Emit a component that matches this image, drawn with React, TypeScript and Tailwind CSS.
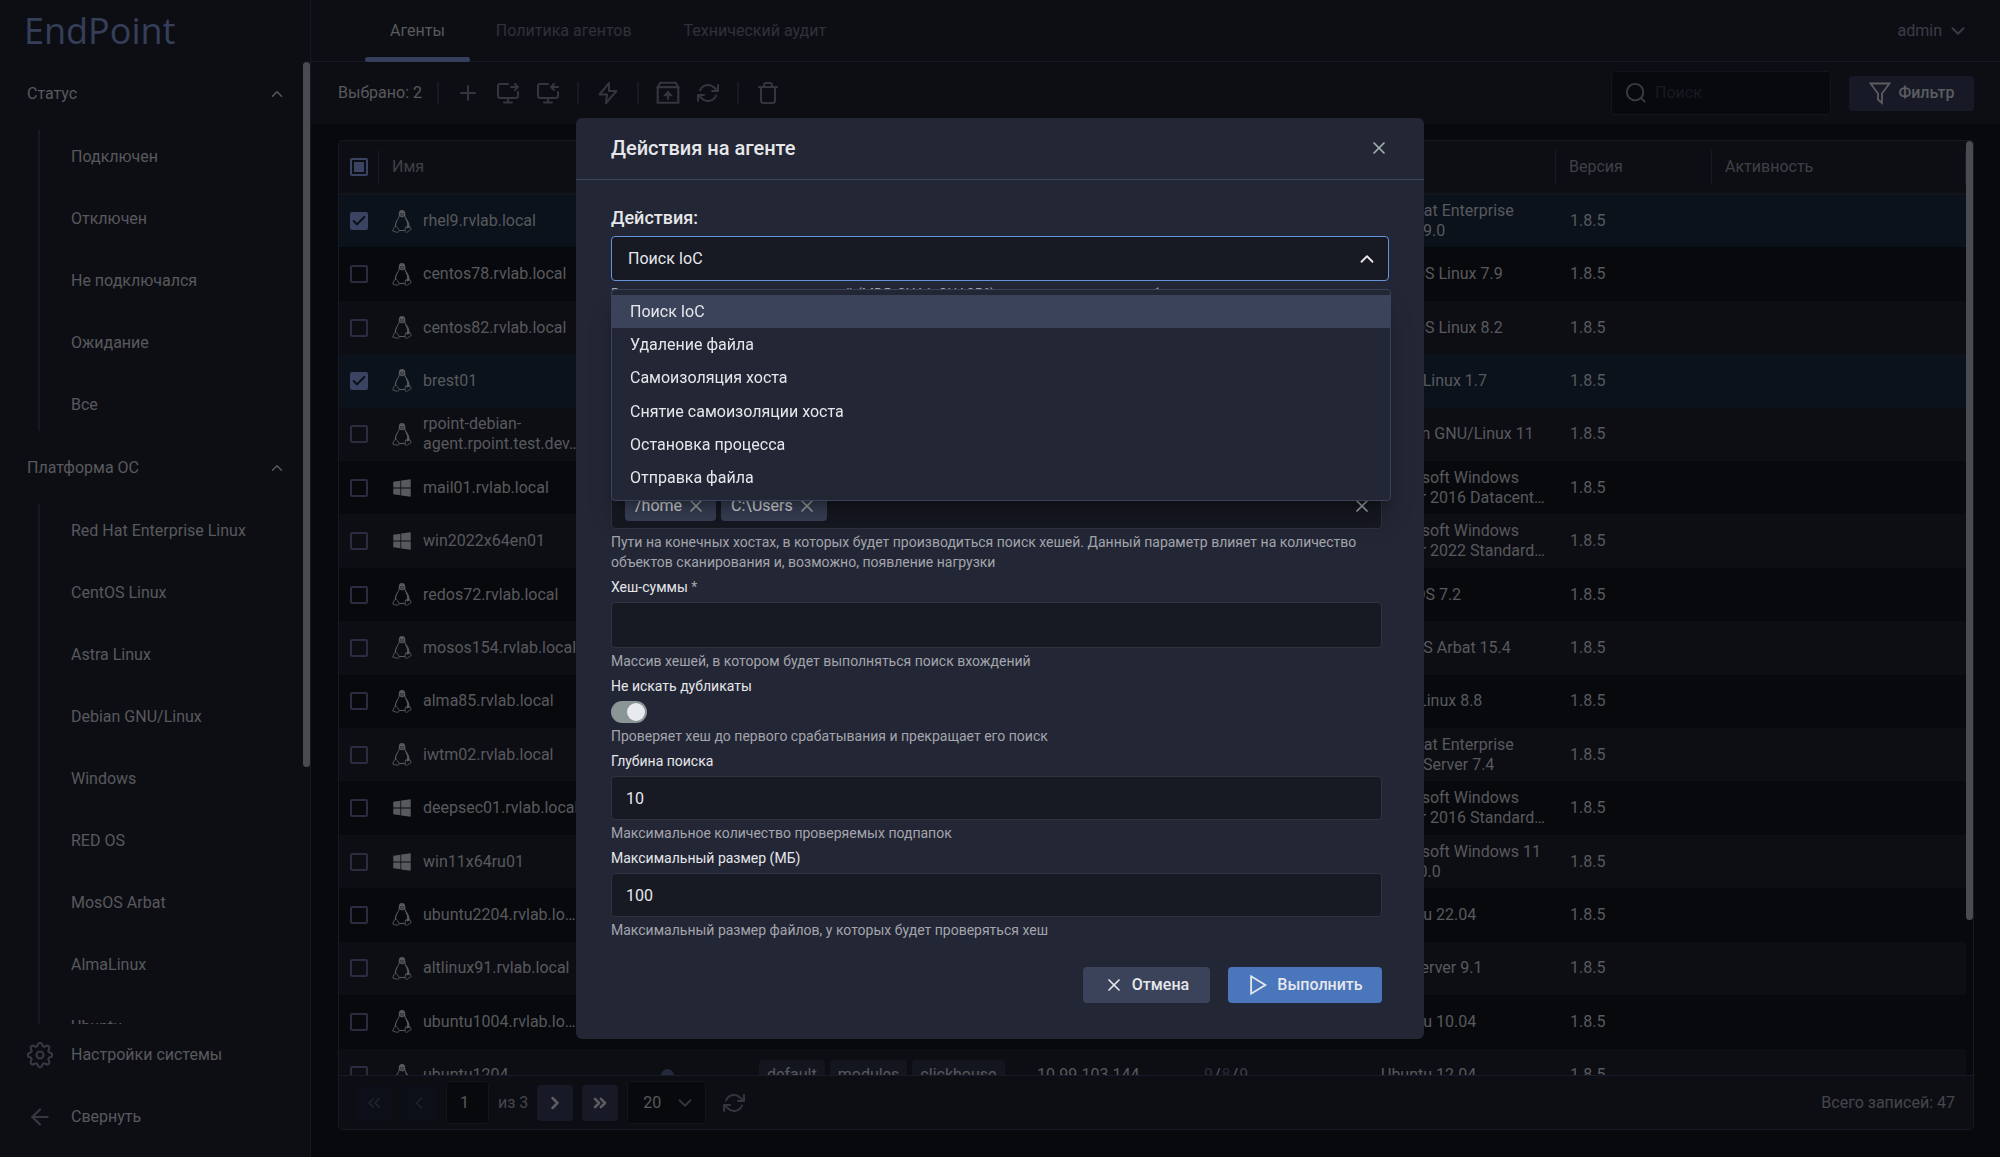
import { type FC, type ReactNode } from "react"
import clsx from "clsx"
import { FaWindows } from "react-icons/fa"
import {
  ArrowLeft,
  Check,
  ChevronDown,
  ChevronLeft,
  ChevronRight,
  ChevronsLeft,
  ChevronsRight,
  ChevronUp,
  Plus,
  X,
} from "lucide-react"

interface Agent {
  name: string
  os: string
  platform: "linux" | "windows"
  selected?: boolean
  tags?: string[]
  ip?: string
  counts?: number[]
}

// non-breaking spaces keep the server edition on one line so it gets the ellipsis
const agents: Agent[] = [
  { name: "rhel9.rvlab.local", os: "Red Hat Enterprise Linux 9.0", platform: "linux", selected: true },
  { name: "centos78.rvlab.local", os: "CentOS Linux 7.9", platform: "linux" },
  { name: "centos82.rvlab.local", os: "CentOS Linux 8.2", platform: "linux" },
  { name: "brest01", os: "Astra Linux 1.7", platform: "linux", selected: true },
  { name: "rpoint-debian-agent.rpoint.test.dev.local", os: "Debian GNU/Linux 11", platform: "linux" },
  { name: "mail01.rvlab.local", os: "Microsoft Windows Server\u00a02016\u00a0Datacenter", platform: "windows" },
  { name: "win2022x64en01", os: "Microsoft Windows Server\u00a02022\u00a0Standard\u00a021H2", platform: "windows" },
  { name: "redos72.rvlab.local", os: "RED OS 7.2", platform: "linux" },
  { name: "mosos154.rvlab.local", os: "MosOS Arbat 15.4", platform: "linux" },
  { name: "alma85.rvlab.local", os: "AlmaLinux 8.8", platform: "linux" },
  { name: "iwtm02.rvlab.local", os: "Red Hat Enterprise Linux Server 7.4", platform: "linux" },
  { name: "deepsec01.rvlab.local", os: "Microsoft Windows Server\u00a02016\u00a0Standard\u00a01607", platform: "windows" },
  { name: "win11x64ru01", os: "Microsoft Windows 11 Pro 10.0", platform: "windows" },
  { name: "ubuntu2204.rvlab.local", os: "Ubuntu 22.04", platform: "linux" },
  { name: "altlinux91.rvlab.local", os: "ALT Server 9.1", platform: "linux" },
  { name: "ubuntu1004.rvlab.local", os: "Ubuntu 10.04", platform: "linux" },
  {
    name: "ubuntu1204",
    os: "Ubuntu 12.04",
    platform: "linux",
    tags: ["default", "modules", "clickhouse"],
    ip: "10.99.103.144",
    counts: [9, 8, 9],
  },
]

const statuses = ["Подключен", "Отключен", "Не подключался", "Ожидание", "Все"]
const platforms = [
  "Red Hat Enterprise Linux",
  "CentOS Linux",
  "Astra Linux",
  "Debian GNU/Linux",
  "Windows",
  "RED OS",
  "MosOS Arbat",
  "AlmaLinux",
  "Ubuntu",
]

const actions = [
  "Поиск IoC",
  "Удаление файла",
  "Самоизоляция хоста",
  "Снятие самоизоляции хоста",
  "Остановка процесса",
  "Отправка файла",
]

interface IconProps {
  className?: string
  children?: ReactNode
}

const Icon: FC<IconProps> = ({ className, children }) => (
  <svg
    viewBox="0 0 24 24"
    className={clsx("shrink-0", className ?? "size-6")}
    fill="none"
    stroke="currentColor"
    strokeWidth="2"
    strokeLinecap="round"
    strokeLinejoin="round"
    aria-hidden="true"
  >
    {children}
  </svg>
)

const MonitorOut = () => (
  <Icon>
    <path d="M12 3H4a2 2 0 0 0-2 2v10a2 2 0 0 0 2 2h16a2 2 0 0 0 2-2v-4M12 17v4M8 21.5h8M15 6h7M19 3l3 3-3 3" />
  </Icon>
)

const MonitorIn = () => (
  <Icon>
    <path d="M12 3H4a2 2 0 0 0-2 2v10a2 2 0 0 0 2 2h16a2 2 0 0 0 2-2v-4M12 17v4M8 21.5h8M22 6h-7M18 3l-3 3 3 3" />
  </Icon>
)

const Bolt = () => (
  <Icon>
    <path d="M13 2 3.5 13.5H11L10 22l10.5-12H13z" />
  </Icon>
)

const Upload = () => (
  <Icon className="size-[26px]">
    <path
      d="M2.5 6.5V21h19V6.5M2.5 6.5 5 2.5h14l2.5 4zM12 17.500V13M9.500 14 12 11.200l2.500 2.800z"
      strokeLinejoin="miter"
    />
  </Icon>
)

const Refresh = () => (
  <Icon>
    <path d="M22 4v6h-6M2 20v-6h6M4 9.5a8.5 8.5 0 0 1 14-3L22 10M2 14l4 3.5a8.5 8.5 0 0 0 14-3" />
  </Icon>
)

const Trash = () => (
  <Icon>
    <path d="M3 6h18M5 6v13.5A2.5 2.5 0 0 0 7.5 22h9a2.5 2.5 0 0 0 2.5-2.5V6M8 5.5V4a2 2 0 0 1 2-2h4a2 2 0 0 1 2 2v1.5" />
  </Icon>
)

const Gear = () => (
  <Icon className="size-7">
    <circle cx="12" cy="12" r="3" strokeWidth="1.8" />
    <path
      strokeWidth="1.8"
      d="M10.3 2.6a1.9 1.9 0 0 1 3.4 0l.5 1.3a1.5 1.5 0 0 0 2 .8l1.2-.6a1.9 1.9 0 0 1 2.5 2.5l-.6 1.2a1.5 1.5 0 0 0 .8 2l1.3.5a1.9 1.9 0 0 1 0 3.4l-1.3.5a1.5 1.5 0 0 0-.8 2l.6 1.2a1.9 1.9 0 0 1-2.5 2.5l-1.2-.6a1.5 1.5 0 0 0-2 .8l-.5 1.3a1.9 1.9 0 0 1-3.4 0l-.5-1.3a1.5 1.5 0 0 0-2-.8l-1.2.6a1.9 1.9 0 0 1-2.5-2.5l.6-1.2a1.5 1.5 0 0 0-.8-2l-1.3-.5a1.9 1.9 0 0 1 0-3.4l1.3-.5a1.5 1.5 0 0 0 .8-2l-.6-1.2a1.9 1.9 0 0 1 2.5-2.5l1.2.6a1.5 1.5 0 0 0 2-.8z"
    />
  </Icon>
)

const Tux = () => (
  <svg viewBox="0 0 20 23" className="h-[23px] w-5 shrink-0" fill="none" stroke="currentColor" aria-hidden="true">
    <path
      fill="currentColor"
      stroke="none"
      d="M10 0C7.7 0 6.7 1.6 6.8 4.2c.1 2.3-.4 3.3-1.7 5.2C3.7 11.5 2.7 13.600 2.800 17l1.300-.2c-.1-2.600.4-4.400 1.500-6.400.9-1.600 1.600-2.600 1.900-4.100l2.600 1.100 2.300-1.200c.2 1.500.9 2.500 1.700 4.200.9 1.900 1.300 3.700.9 5.600l-.6 1 .7 1.600 2.300-.8c.6-3.100-.6-6.300-2.500-8.800-1.300-1.700-1.600-2.700-1.600-4.800C13.300 1.600 12.300 0 10 0z"
    />
    <path fill="#0b0c10" stroke="none" d="M8.3 3.3h1v1.300h-1zM10.600 3.300h1.100v1.300h-1.100zM8.500 5.300h3l-1.500.8z" />
    <path
      strokeWidth="0.9"
      strokeLinejoin="round"
      d="M3.3 16.3 1.9 17.8c-.2.9-.8 2.1-1.2 3.2 1.3.8 3.2.8 4.9 1.3 1-.1 1.8-.9 1.500-2-.8-1.500-1.800-3.500-3.800-4zM16.800 16.600c-1 .9-2.400.5-3 .2-.7 1.600-.9 3.200-.7 4.700.8 1.200 2 .9 2.900 0 1-.9 2.400-1.300 3.400-2.100-.7-.7-1-1.500-1.300-2.500z"
    />
    <path strokeWidth="1.1" d="M7.2 20.5h5.7" />
  </svg>
)

const ToolButton: FC<{ label: string; children: ReactNode }> = ({ label, children }) => (
  <button type="button" aria-label={label} className="flex size-10 items-center justify-center text-[#34353f]">
    {children}
  </button>
)

const Separator = () => <div className="mx-[9px] h-[22px] w-[2px] bg-[#171824]" />

interface SectionProps {
  title: string
  items: string[]
}

const SidebarSection: FC<SectionProps> = ({ title, items }) => (
  <section className="mb-[5px]">
    <button type="button" className="mb-[5px] flex h-[63px] w-full items-center justify-between pr-[17px] pl-[27px]">
      {title}
      <ChevronUp className="size-[18px]" />
    </button>
    <ul className="ml-[38px] flex flex-col gap-[9px] border-l-2 border-[#171824] pl-[31px]">
      {items.map((item) => (
        <li key={item}>
          <a href="#" className="flex h-[53px] items-center">
            {item}
          </a>
        </li>
      ))}
    </ul>
  </section>
)

const Sidebar = () => (
  <aside className="flex w-[311px] shrink-0 flex-col border-r border-[#171824] bg-[#0d0e14]">
    <div className="flex h-[62px] shrink-0 items-center pl-6 font-['Open_Sans',sans-serif] text-4xl text-[#363f5a]">
      EndPoint
    </div>
    <div className="flex min-h-0 flex-1">
      <div className="min-w-0 flex-1 overflow-hidden">
        <SidebarSection title="Статус" items={statuses} />
        <SidebarSection title="Платформа ОС" items={platforms} />
      </div>
      <div className="h-[705px] w-[7px] rounded-full bg-[#4a4b50]" />
    </div>
    <div className="shrink-0 pb-[9px]">
      <a href="#" className="flex h-[62px] items-center gap-[17px] pl-[26px]">
        <span className="flex w-7 justify-center text-[#363843]">
          <Gear />
        </span>
        Настройки системы
      </a>
      <button type="button" className="flex h-[62px] items-center gap-[17px] pl-[26px]">
        <span className="flex w-7 justify-center text-[#363843]">
          <ArrowLeft className="size-[26px]" />
        </span>
        Свернуть
      </button>
    </div>
  </aside>
)

const Topbar = () => (
  <header className="flex h-[62px] shrink-0 items-center justify-between border-b border-[#171921] bg-[#0d0e14] pr-[31px] pl-[54px]">
    <nav className="flex self-stretch text-[#30313b]">
      <a href="#" className="relative flex items-center px-[25px] text-[#58595d]">
        Агенты
        <span className="absolute inset-x-0 -bottom-px h-[5px] rounded-full bg-[#363f5c]" />
      </a>
      <a href="#" className="flex items-center px-[26px]">
        Политика агентов
      </a>
      <a href="#" className="flex items-center px-[26px]">
        Технический аудит
      </a>
    </nav>
    <button type="button" className="flex items-center gap-[5px] text-[#3c3d48]">
      admin
      <ChevronDown className="size-[22px]" />
    </button>
  </header>
)

const Toolbar = () => (
  <div className="flex h-[62px] shrink-0 items-center bg-[#0d0e14] pr-[26px] pl-[27px]">
    <span className="mr-1.5">Выбрано: 2</span>
    <Separator />
    <ToolButton label="Добавить">
      <Plus className="size-6" />
    </ToolButton>
    <ToolButton label="Отправить">
      <MonitorOut />
    </ToolButton>
    <ToolButton label="Получить">
      <MonitorIn />
    </ToolButton>
    <Separator />
    <ToolButton label="Действие">
      <Bolt />
    </ToolButton>
    <Separator />
    <ToolButton label="Обновить агент">
      <Upload />
    </ToolButton>
    <ToolButton label="Обновить">
      <Refresh />
    </ToolButton>
    <Separator />
    <ToolButton label="Удалить">
      <Trash />
    </ToolButton>
    <label className="ml-auto flex h-11 w-[220px] items-center gap-2 rounded border border-[#13141c] bg-[#08090d] pl-[13px]">
      <Icon className="size-[22px] text-[#3a3b46]">
        <circle cx="11" cy="11" r="9" />
        <path d="m18 18 3.5 3.5" />
      </Icon>
      <input
        type="text"
        aria-label="Поиск"
        placeholder="Поиск"
        className="w-full min-w-0 bg-transparent outline-none placeholder:text-[#191a24]"
      />
    </label>
    <button
      type="button"
      className="ml-[18px] flex h-[35px] w-[125px] items-center justify-center gap-1.5 rounded bg-[#171a26] font-medium text-[#5c5d61]"
    >
      <Icon className="size-6">
        <path d="M2.5 2.5h19L14 12.5V22l-4-3.5v-6z" strokeWidth="1.8" strokeLinejoin="miter" />
      </Icon>
      Фильтр
    </button>
  </div>
)

const Tick: FC<{ label: string; checked?: boolean }> = ({ label, checked }) => (
  <span className="grid size-[18px] place-items-center">
    <input
      type="checkbox"
      aria-label={label}
      defaultChecked={checked}
      className="col-start-1 row-start-1 size-[18px] appearance-none rounded-xs border-2 border-[#2a2d3f] checked:border-[#3a4362] checked:bg-[#3a4362]"
    />
    {checked && <Check className="pointer-events-none col-start-1 row-start-1 size-4 text-[#0b0f17]" strokeWidth={3} />}
  </span>
)

const AgentRow: FC<{ agent: Agent }> = ({ agent }) => (
  <tr className={clsx("h-[53px]", agent.selected ? "bg-[#0b121b]" : "odd:bg-[#0d0e13] even:bg-[#08090d]")}>
    <td className="pl-[11px]">
      <Tick label={agent.name} checked={agent.selected} />
    </td>
    <td className="pr-2 pl-[13px]">
      <div className="flex items-center gap-[11px]">
        {agent.platform === "linux" ? <Tux /> : <FaWindows className="size-5 shrink-0" />}
        <span className="line-clamp-2 min-w-0 text-ellipsis">{agent.name}</span>
      </div>
    </td>
    <td>{agent.tags && <span className="mx-auto block size-[13px] rounded-full bg-[#242a3e]" />}</td>
    <td className="pl-[14px]">
      <div className="flex gap-[5px]">
        {agent.tags?.map((tag) => (
          <span key={tag} className="flex h-[30px] items-center rounded bg-[#14161f] px-2">
            {tag}
          </span>
        ))}
      </div>
    </td>
    <td className="pl-[14px]">{agent.ip}</td>
    <td className="pl-[14px]">
      {agent.counts && (
        <span className="flex gap-px">
          <span className="text-[#2c2d38]">{agent.counts[0]}</span>/
          <span className="text-[#23263a]">{agent.counts[1]}</span>/
          <span className="text-[#3c3d48]">{agent.counts[2]}</span>
        </span>
      )}
    </td>
    <td className="pr-[10px] pl-[14px]">
      <span className="line-clamp-2 text-ellipsis">{agent.os}</span>
    </td>
    <td className="pl-[14px]">1.8.5</td>
    <td />
  </tr>
)

const HeadCell: FC<{ children?: ReactNode }> = ({ children }) => (
  <th className="p-0 text-left font-normal">
    <div className="flex h-[35px] items-center border-r border-[#171924] pl-[13px]">{children}</div>
  </th>
)

const PageButton: FC<{ label: string; disabled?: boolean; children: ReactNode }> = ({ label, disabled, children }) => (
  <button
    type="button"
    aria-label={label}
    disabled={disabled}
    className="flex size-9 items-center justify-center rounded bg-[#171a26] text-[#5c5d61] disabled:bg-[#0c0f17] disabled:text-[#202331]"
  >
    {children}
  </button>
)

const Pagination = () => (
  <footer className="flex h-[54px] shrink-0 items-center gap-[9px] border-t border-[#171a29] bg-[#0d0e13] pr-[18px] pl-[17px]">
    <PageButton label="Первая" disabled>
      <ChevronsLeft className="size-5" />
    </PageButton>
    <PageButton label="Назад" disabled>
      <ChevronLeft className="size-5" />
    </PageButton>
    <input
      type="text"
      aria-label="Страница"
      defaultValue="1"
      className="h-[43px] w-[43px] rounded border border-[#13141c] bg-[#08090d] pl-[13px] outline-none"
    />
    <span className="text-[#45464c]">из 3</span>
    <PageButton label="Вперёд">
      <ChevronRight className="size-5" strokeWidth={3} />
    </PageButton>
    <PageButton label="Последняя">
      <ChevronsRight className="size-5" strokeWidth={3} />
    </PageButton>
    <div className="grid h-[43px] w-[79px] items-center rounded border border-[#13141c] bg-[#08090d]">
      <select
        aria-label="Записей на странице"
        className="col-start-1 row-start-1 appearance-none bg-transparent pl-[15px] outline-none"
      >
        <option>20</option>
      </select>
      <ChevronDown className="pointer-events-none col-start-1 row-start-1 mr-[9px] size-[22px] justify-self-end text-[#34353f]" />
    </div>
    <button type="button" aria-label="Обновить" className="ml-[7px] text-[#34353f]">
      <Refresh />
    </button>
    <span className="ml-auto text-[#45464c]">Всего записей: 47</span>
  </footer>
)

const AgentTable = () => (
  <div className="mr-[26px] mb-[27px] ml-[27px] mt-4 flex min-h-0 flex-1 flex-col overflow-hidden rounded border border-[#171924]">
    <div className="flex min-h-0 flex-1 overflow-hidden">
      <div className="min-w-0 flex-1 overflow-hidden">
        <table className="h-[961px] w-full table-fixed border-collapse">
          <colgroup>
            <col className="w-[40px]" />
            <col className="w-[211px]" />
            <col className="w-[155px]" />
            <col className="w-[278px]" />
            <col className="w-[167px]" />
            <col className="w-[177px]" />
            <col className="w-[189px]" />
            <col className="w-[156px]" />
            <col />
          </colgroup>
          <thead className="bg-[#0d0e13] text-[#3f4047]">
            <tr className="h-[53px] border-b-2 border-[#12151c]">
              <th className="p-0">
                <div className="flex h-[35px] items-center border-r border-[#171924] pl-[11px]">
                  <span className="grid size-[18px] place-items-center">
                    <input
                      type="checkbox"
                      aria-label="Выбрать все"
                      className="col-start-1 row-start-1 size-[18px] appearance-none rounded-xs border-2 border-[#3a4362]"
                    />
                    <span className="pointer-events-none col-start-1 row-start-1 size-[10px] bg-[#3a4362]" />
                  </span>
                </div>
              </th>
              <HeadCell>Имя</HeadCell>
              <HeadCell />
              <HeadCell />
              <HeadCell />
              <HeadCell />
              <HeadCell />
              <HeadCell>Версия</HeadCell>
              <HeadCell>Активность</HeadCell>
            </tr>
          </thead>
          <tbody>
            {agents.map((agent) => (
              <AgentRow key={agent.name} agent={agent} />
            ))}
          </tbody>
        </table>
      </div>
      <div className="h-[779px] w-[7px] rounded-full bg-[#4a4b50]" />
    </div>
    <Pagination />
  </div>
)

interface FieldProps {
  id: string
  label: ReactNode
  help: string
  children: ReactNode
}

const Field: FC<FieldProps> = ({ id, label, help, children }) => (
  <div className="mb-[5px] flex flex-col text-sm leading-5">
    <label htmlFor={id} className="mb-[5px]">
      {label}
    </label>
    {children}
    <p className="mt-[3px] text-[#a3a5ad]">{help}</p>
  </div>
)

const inputClass = "w-full rounded border border-[#2f323f] bg-[#171923] px-[14px] text-base outline-none"

const PathTag: FC<{ path: string }> = ({ path }) => (
  <span className="flex h-[30px] items-center gap-1 rounded bg-[#3b435a] px-[10px] text-base">
    {path}
    <button type="button" aria-label={`Удалить ${path}`} className="text-[#a5b0b0]">
      <X className="size-5" />
    </button>
  </span>
)

const ActionSelect = () => (
  <div className="relative mt-1.5">
    <button
      id="action"
      type="button"
      aria-haspopup="listbox"
      aria-expanded="true"
      className="flex h-[45px] w-full items-center justify-between rounded border border-[#6493dc] bg-[#171923] pr-[10px] pl-4"
    >
      Поиск IoC
      <ChevronUp className="size-[22px]" />
    </button>
    <ul
      role="listbox"
      aria-label="Действия"
      className="absolute top-[53px] -right-0.5 left-0 flex h-[212px] flex-col rounded border border-[#3b435a] bg-[#232634] py-[5px] shadow-xl shadow-black/30"
    >
      {actions.map((action, idx) => (
        <li
          key={action}
          role="option"
          aria-selected={idx === 0}
          className="flex flex-1 items-center px-[18px] aria-selected:bg-[#3b435a]"
        >
          {action}
        </li>
      ))}
    </ul>
  </div>
)

const ActionDialog = () => (
  <div role="dialog" aria-labelledby="dialog-title" className="w-[848px] rounded-md bg-[#232634] text-[#e6e7eb]">
    <div className="flex h-[62px] items-center justify-between border-b border-[#3b435a] px-[35px] pb-0.5">
      <h2 id="dialog-title" className="text-xl font-medium">
        Действия на агенте
      </h2>
      <button type="button" aria-label="Закрыть" className="text-[#a5b0b0]">
        <X className="size-5" />
      </button>
    </div>
    <div className="px-[35px] pt-[26px] pb-9">
      <label htmlFor="action" className="block text-lg leading-6 font-medium">
        Действия:
      </label>
      <ActionSelect />
      <div className="pt-[3px] pr-[7px]">
        <p className="mb-[154px] text-sm leading-5 text-[#a3a5ad]">
          Выполняет поиск списка вхождений (MD5, SHA1, SHA256) на конечных хостах и объектах
        </p>
        <Field
          id="paths"
          label="Пути"
          help="Пути на конечных хостах, в которых будет производиться поиск хешей. Данный параметр влияет на количество объектов сканирования и, возможно, появление нагрузки"
        >
          <div className="flex h-[46px] items-center gap-[5px] rounded border border-[#2f323f] bg-[#171923] pr-[9px] pl-[13px]">
            <PathTag path="/home" />
            <PathTag path="C:\Users" />
            <input id="paths" type="text" className="min-w-0 flex-1 bg-transparent outline-none" />
            <button type="button" aria-label="Очистить" className="text-[#a5b0b0]">
              <X className="size-5" />
            </button>
          </div>
        </Field>
        <Field
          id="hashes"
          label={
            <>
              Хеш-суммы <span className="text-[#a3a5ad]">*</span>
            </>
          }
          help="Массив хешей, в котором будет выполняться поиск вхождений"
        >
          <input id="hashes" type="text" className={clsx(inputClass, "h-[46px]")} />
        </Field>
        <Field
          id="duplicates"
          label="Не искать дубликаты"
          help="Проверяет хеш до первого срабатывания и прекращает его поиск"
        >
          <span className="grid h-[22px] w-9 items-center">
            <input
              id="duplicates"
              type="checkbox"
              role="switch"
              defaultChecked
              className="col-start-1 row-start-1 h-[22px] w-9 appearance-none rounded-full bg-[#8a9595]"
            />
            <span className="pointer-events-none col-start-1 row-start-1 mr-[2px] size-[18px] justify-self-end rounded-full bg-[#e9eaef]" />
          </span>
        </Field>
        <Field id="depth" label="Глубина поиска" help="Максимальное количество проверяемых подпапок">
          <input id="depth" type="text" defaultValue="10" className={clsx(inputClass, "h-11")} />
        </Field>
        <Field
          id="size"
          label="Максимальный размер (МБ)"
          help="Максимальный размер файлов, у которых будет проверяться хеш"
        >
          <input id="size" type="text" defaultValue="100" className={clsx(inputClass, "h-11")} />
        </Field>
        <div className="mt-[27px] flex justify-end gap-[18px] font-medium">
          <button type="button" className="flex h-9 w-[127px] items-center justify-center gap-2 rounded bg-[#3b435a]">
            <X className="size-5" />
            Отмена
          </button>
          <button type="button" className="flex h-9 w-[154px] items-center justify-center gap-2 rounded bg-[#4a76bc]">
            <Icon className="size-[22px]">
              <path d="M4.5 2.5v19L20 12z" strokeLinejoin="miter" />
            </Icon>
            Выполнить
          </button>
        </div>
      </div>
    </div>
  </div>
)

const App = () => {
  return (
    <div className="relative flex h-screen overflow-hidden bg-[#08090d] font-[Roboto,sans-serif] text-base leading-5 text-[#58595d]">
      <Sidebar />
      <main className="flex min-w-0 flex-1 flex-col">
        <Topbar />
        <Toolbar />
        <AgentTable />
      </main>
      <div className="fixed inset-0 flex items-center justify-center">
        <ActionDialog />
      </div>
    </div>
  )
}

export default App
